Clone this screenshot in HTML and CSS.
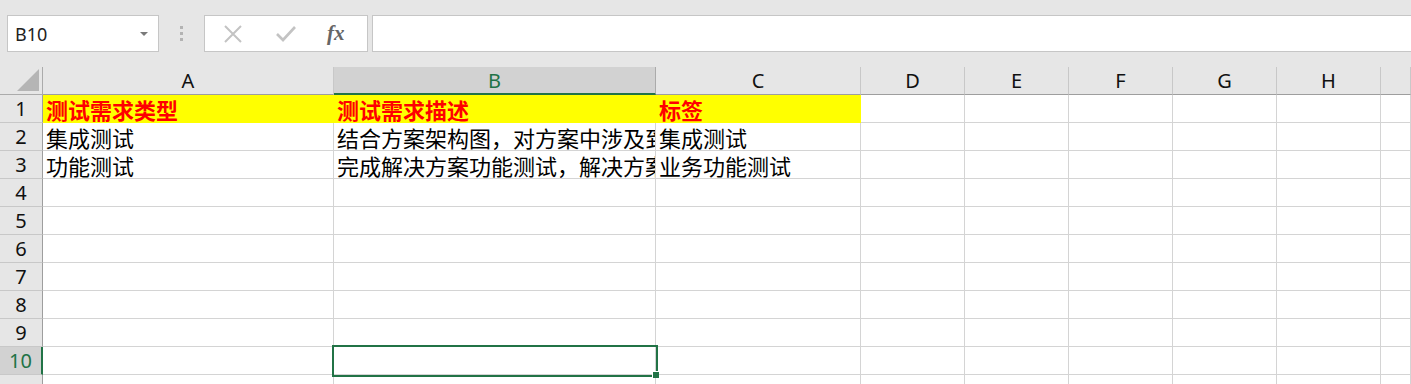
FILE: index.html
```html
<!DOCTYPE html>
<html lang="zh-CN">
<head>
  <meta charset="UTF-8">
  <title>工作表</title>
  <link rel="stylesheet" href="styles.css">
</head>
<body>
  <div class="bar">
    <div class="namebox">
      <span>B10</span>
      <svg class="caret" width="8" height="5" viewBox="0 0 8 5"><polygon points="0,0 8,0 4,4" fill="#7a7a7a"/></svg>
    </div>
    <div class="grip"><i></i><i></i><i></i></div>
    <div class="btns">
      <svg width="20" height="20" viewBox="0 0 20 20"><path d="M2 2 L18 18 M18 2 L2 18" stroke="#c3c3c3" stroke-width="2" fill="none"/></svg>
      <svg width="22" height="20" viewBox="0 0 22 20"><path d="M2 10 L8 16 L20 3" stroke="#c3c3c3" stroke-width="2.6" fill="none"/></svg>
      <span class="fx">fx</span>
    </div>
    <div class="formula"></div>
  </div>

  <div class="sheet">
    <div class="corner"><svg width="22" height="22" viewBox="0 0 22 22"><polygon points="22,0 22,22 0,22" fill="#b5b5b5"/></svg></div>
    <div class="ch">A</div>
    <div class="ch on">B</div>
    <div class="ch">C</div>
    <div class="ch">D</div>
    <div class="ch">E</div>
    <div class="ch">F</div>
    <div class="ch">G</div>
    <div class="ch">H</div>
    <div class="ch last"></div>

    <div class="rh">1</div>
    <div class="c hd">测试需求类型</div>
    <div class="c hd">测试需求描述</div>
    <div class="c hd">标签</div>
    <div class="c"></div><div class="c"></div><div class="c"></div><div class="c"></div><div class="c"></div><div class="c"></div>

    <div class="rh">2</div>
    <div class="c">集成测试</div>
    <div class="c">结合方案架构图，对方案中涉及到</div>
    <div class="c">集成测试</div>
    <div class="c"></div><div class="c"></div><div class="c"></div><div class="c"></div><div class="c"></div><div class="c"></div>

    <div class="rh">3</div>
    <div class="c">功能测试</div>
    <div class="c">完成解决方案功能测试，解决方案</div>
    <div class="c">业务功能测试</div>
    <div class="c"></div><div class="c"></div><div class="c"></div><div class="c"></div><div class="c"></div><div class="c"></div>

    <div class="rh">4</div>
    <div class="c"></div><div class="c"></div><div class="c"></div><div class="c"></div><div class="c"></div><div class="c"></div><div class="c"></div><div class="c"></div><div class="c"></div>
    <div class="rh">5</div>
    <div class="c"></div><div class="c"></div><div class="c"></div><div class="c"></div><div class="c"></div><div class="c"></div><div class="c"></div><div class="c"></div><div class="c"></div>
    <div class="rh">6</div>
    <div class="c"></div><div class="c"></div><div class="c"></div><div class="c"></div><div class="c"></div><div class="c"></div><div class="c"></div><div class="c"></div><div class="c"></div>
    <div class="rh">7</div>
    <div class="c"></div><div class="c"></div><div class="c"></div><div class="c"></div><div class="c"></div><div class="c"></div><div class="c"></div><div class="c"></div><div class="c"></div>
    <div class="rh">8</div>
    <div class="c"></div><div class="c"></div><div class="c"></div><div class="c"></div><div class="c"></div><div class="c"></div><div class="c"></div><div class="c"></div><div class="c"></div>
    <div class="rh">9</div>
    <div class="c"></div><div class="c"></div><div class="c"></div><div class="c"></div><div class="c"></div><div class="c"></div><div class="c"></div><div class="c"></div><div class="c"></div>

    <div class="rh on">10</div>
    <div class="c"></div><div class="c sel"></div><div class="c"></div><div class="c"></div><div class="c"></div><div class="c"></div><div class="c"></div><div class="c"></div><div class="c"></div>

    <div class="rh"></div>
    <div class="c"></div><div class="c"></div><div class="c"></div><div class="c"></div><div class="c"></div><div class="c"></div><div class="c"></div><div class="c"></div><div class="c"></div>
  </div>
</body>
</html>
```

FILE: styles.css
```css
body { margin: 0; background: #e6e6e6; font-family: "Noto Sans CJK SC", "Noto Sans", sans-serif; overflow: hidden; }

.bar { height: 67px; display: flex; align-items: flex-start; padding: 15px 0 0 7px; box-sizing: border-box; }
.namebox { width: 152px; height: 37px; box-sizing: border-box; background: #fff; border: 1px solid #c6c6c6; display: flex; align-items: center; justify-content: space-between; padding: 0 10px 0 7px; font-family: "Noto Sans", sans-serif; font-size: 18px; color: #222; }
.caret { margin-top: 1px; }
.grip { width: 45px; height: 37px; display: flex; flex-direction: column; align-items: center; justify-content: center; gap: 3px; }
.grip i { width: 3px; height: 3px; background: #b3b3b3; display: block; }
.btns { width: 164px; height: 37px; box-sizing: border-box; background: #fff; border: 1px solid #c6c6c6; display: flex; align-items: center; padding: 0 0 0 18px; gap: 32px; }
.fx { font-family: "Liberation Serif", serif; font-style: italic; font-weight: bold; font-size: 21px; color: #666; margin-left: -2px; }
.formula { flex: 1; height: 37px; margin-left: 4px; margin-right: -10px; box-sizing: border-box; background: #fff; border: 1px solid #c6c6c6; }

.sheet { display: grid; grid-template-columns: 43px 291px 322px 205px repeat(5, 104px) 1fr; grid-auto-rows: 28px; background: #fff; }
.sheet > div { box-sizing: border-box; }

.corner { background: #e6e6e6; border-right: 1px solid #ababab; border-bottom: 1px solid #ababab; display: flex; align-items: flex-end; justify-content: flex-end; padding: 0 3px 3px 0; }
.ch { background: #e6e6e6; border-right: 1px solid #c8c8c8; border-bottom: 1px solid #9e9e9e; text-align: center; line-height: 28px; font-family: "Noto Sans", sans-serif; font-size: 20px; color: #111; }
.ch.on { background: #d2d2d2; color: #217346; border-bottom: 2px solid #217346; border-right-color: #ababab; }
.rh { background: #e6e6e6; border-right: 1px solid #9e9e9e; border-bottom: 1px solid #c8c8c8; text-align: center; line-height: 28px; font-family: "Noto Sans", sans-serif; font-size: 20px; color: #111; }
.rh.on { background: #d2d2d2; color: #217346; border-right: 2px solid #217346; }

.c { border-right: 1px solid #d4d4d4; border-bottom: 1px solid #d4d4d4; font-size: 22px; line-height: 28px; padding-left: 3px; white-space: nowrap; overflow: hidden; color: #000; }
.c.hd { background: #ffff00; border-color: #ffff00; color: #ff0000; font-weight: bold; }
.c.sel { outline: 2px solid #217346; position: relative; overflow: visible; z-index: 1; }
.c.sel::after { content: ""; position: absolute; right: -4px; bottom: -4px; width: 6px; height: 6px; background: #217346; border: 1px solid #fff; border-width: 1px 0 0 1px; }
```
